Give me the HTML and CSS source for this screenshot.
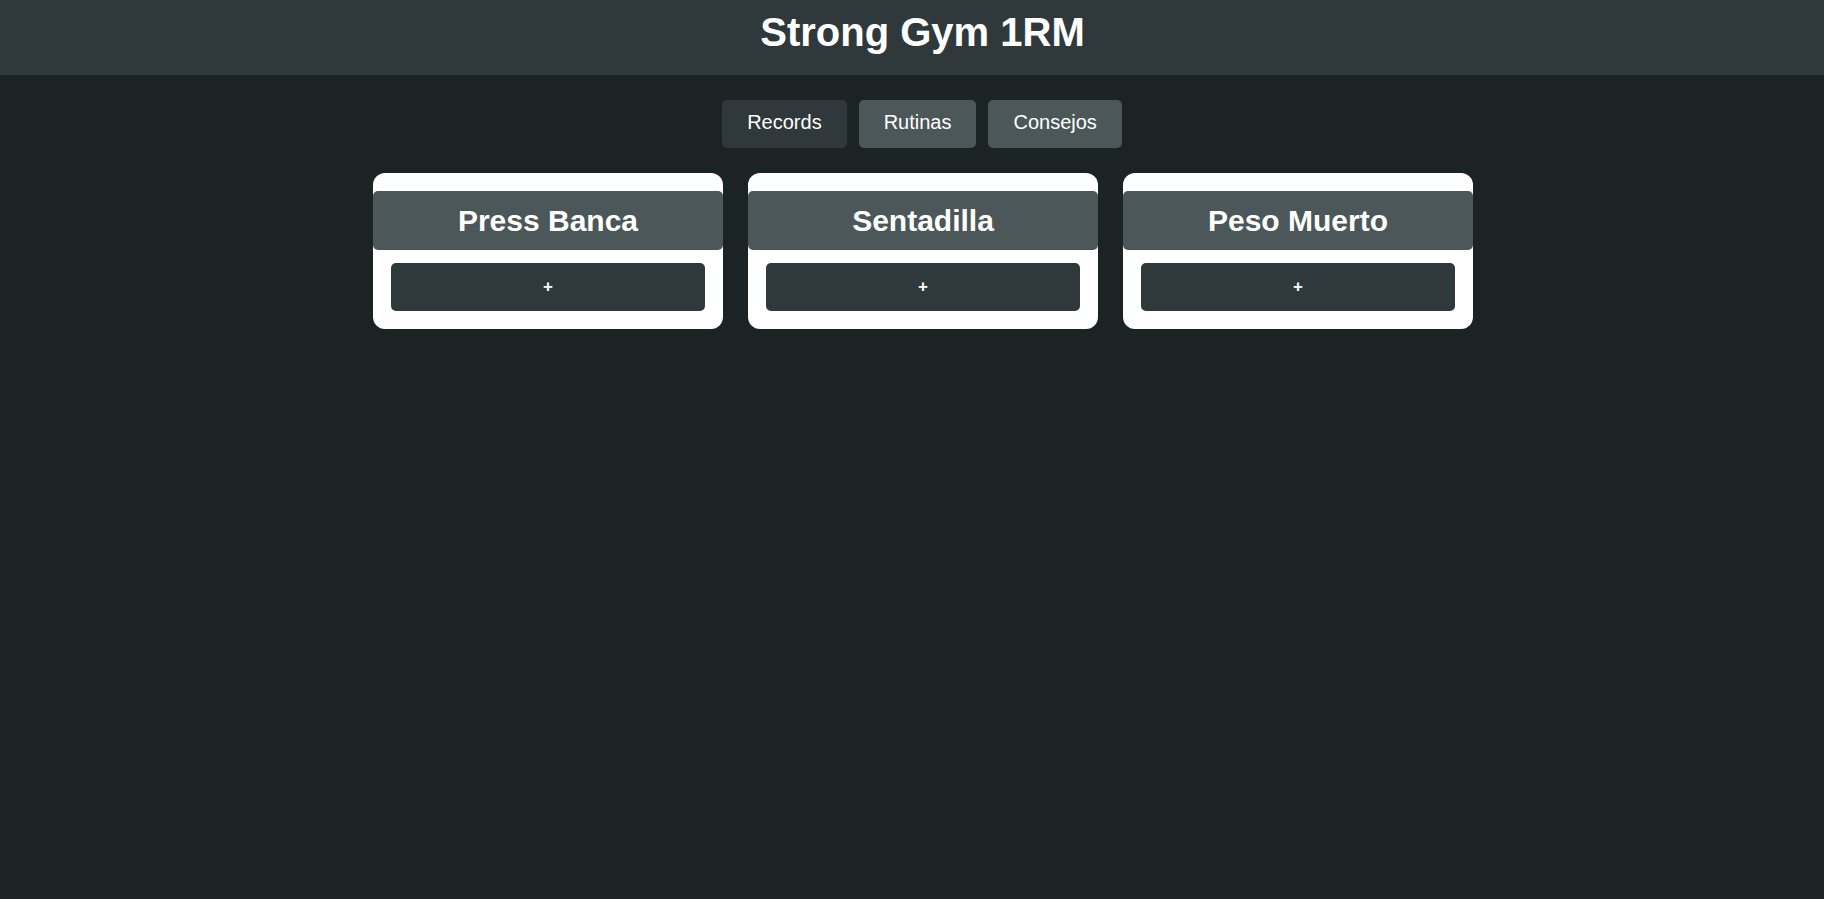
FILE: index.html
```html
<!DOCTYPE html>
<html lang="es">
<head>
<meta charset="utf-8">
<title>Strong Gym 1RM</title>
<link rel="stylesheet" href="styles.css">
</head>
<body>
<header class="top">
  <h1 class="title">Strong Gym 1RM</h1>
</header>
<nav class="tabs">
  <button class="tab tab-active">Records</button>
  <button class="tab">Rutinas</button>
  <button class="tab">Consejos</button>
</nav>
<main class="cards">
  <section class="card">
    <h2 class="card-title">Press Banca</h2>
    <div class="card-body"><button class="add">+</button></div>
  </section>
  <section class="card">
    <h2 class="card-title">Sentadilla</h2>
    <div class="card-body"><button class="add">+</button></div>
  </section>
  <section class="card">
    <h2 class="card-title">Peso Muerto</h2>
    <div class="card-body"><button class="add">+</button></div>
  </section>
</main>
</body>
</html>
```

FILE: styles.css
```css
* { box-sizing: border-box; }
html, body {
  margin: 0;
  background: #1c2325;
  color: #ffffff;
  font-family: "Liberation Sans", Arial, sans-serif;
  min-height: 100%;
}
.top {
  background: #2f393b;
  padding: 9px 0 20px 21px;
}
.title {
  margin: 0;
  font-size: 40px;
  line-height: 46px;
  font-weight: bold;
  text-align: center;
}
.tabs {
  display: flex;
  justify-content: center;
  gap: 12px;
  padding: 25px 0 0 20px;
}
.tab {
  font-family: inherit;
  font-size: 20px;
  line-height: 23px;
  padding: 11px 25px 14px;
  border: none;
  border-radius: 5px;
  background: #4b5759;
  color: #ffffff;
  cursor: pointer;
}
.tab-active {
  background: #2f393b;
}
.cards {
  display: grid;
  grid-template-columns: repeat(3, 350px);
  gap: 25px;
  justify-content: center;
  padding: 25px 0 0 22px;
}
.card {
  background: #ffffff;
  border-radius: 12px;
  padding-top: 18px;
}
.card-title {
  margin: 0;
  background: #4b5759;
  border-radius: 5px;
  padding: 12px;
  font-size: 30px;
  line-height: 35px;
  font-weight: bold;
  text-align: center;
}
.card-body {
  padding: 13px 18px 18px;
}
.add {
  display: block;
  width: 100%;
  height: 48px;
  border: none;
  border-radius: 5px;
  background: #2f393b;
  color: #ffffff;
  font-family: inherit;
  font-size: 17px;
  font-weight: bold;
  cursor: pointer;
}
```
